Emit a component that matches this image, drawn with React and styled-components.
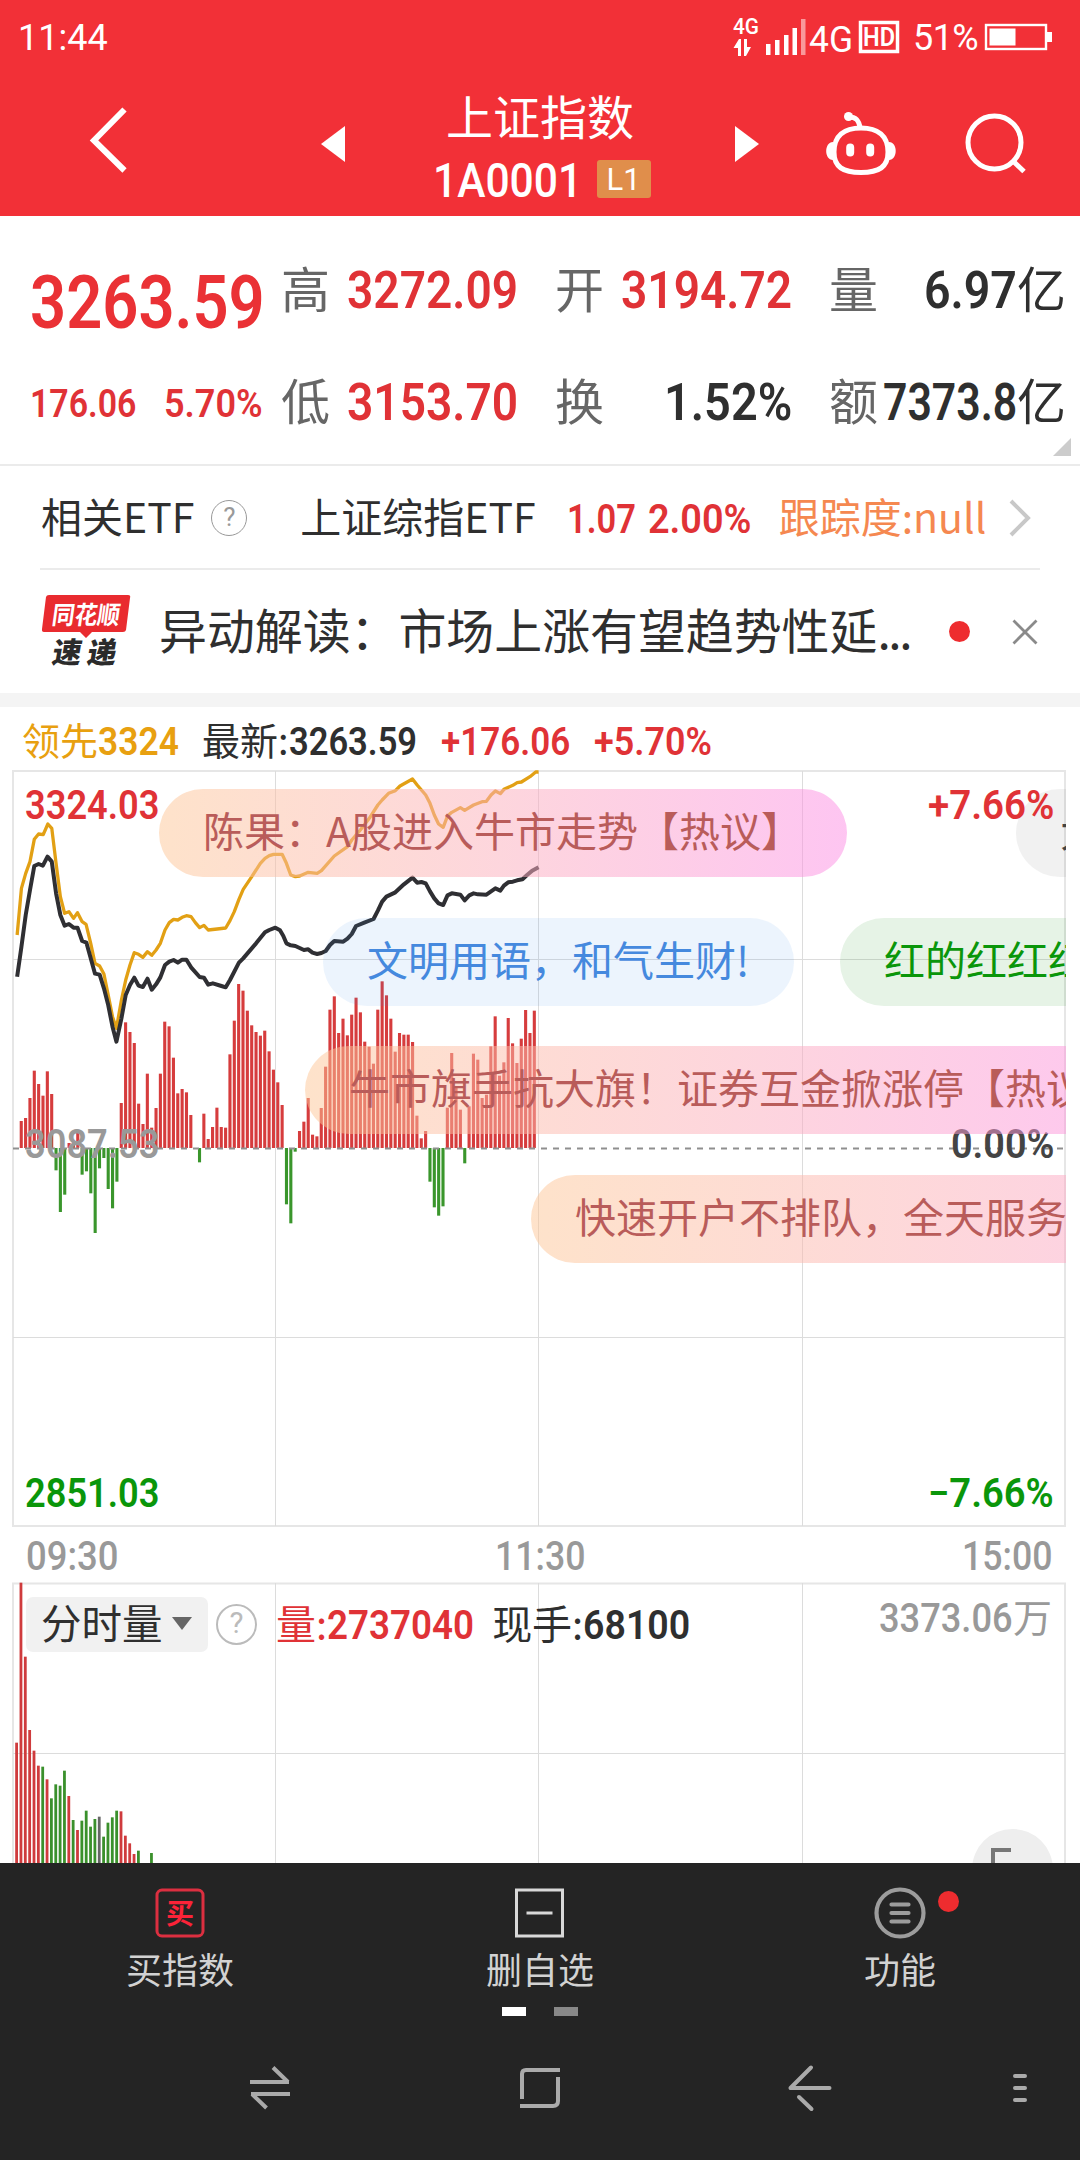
import React, { useLayoutEffect, useRef, useState } from 'react';
import styled, { createGlobalStyle } from 'styled-components';

const RED = '#e03236';
const GREEN = '#0a960a';
const DARK = '#2f2f2f';
const CJK = "'Noto Sans CJK SC', sans-serif";

const GlobalStyle = createGlobalStyle`
  * {
    box-sizing: border-box;
  }
  body {
    margin: 0;
    background: #fff;
    font-family: ${CJK};
  }
  svg {
    display: block;
    flex: none;
    overflow: visible;
  }
`;

const Page = styled.div`
  width: 1080px;
  height: 2160px;
  overflow: hidden;
  display: flex;
  flex-direction: column;
  background: #fff;
`;

// ---- text ----

const NumBox = styled.span`
  display: block;
  flex: none;
  width: ${p => p.$w}px;
  margin-left: ${p => p.$ml || 0}px;
  padding-top: 3px;
  font: ${p => p.$weight || 600} ${p => p.$size}px/1 Roboto, sans-serif;
  color: ${p => p.$color || DARK};
  white-space: nowrap;
`;

const NumText = styled.span`
  display: inline-block;
  vertical-align: top;
  transform-origin: 0 50%;
`;

// narrow figures: the text is squeezed to the width it is given
const Num = ({ w, ml, size = 40, weight, color, children }) => {
  const ref = useRef(null);
  const [scale, setScale] = useState(1);

  useLayoutEffect(() => {
    setScale(w / ref.current.offsetWidth);
  }, [w, size, children]);

  return (
    <NumBox $w={w} $ml={ml} $size={size} $weight={weight} $color={color}>
      <NumText ref={ref} style={{ transform: `scaleX(${scale})` }}>{children}</NumText>
    </NumBox>
  );
};

const Han = styled.span`
  flex: none;
  font-family: ${CJK};
  font-size: ${p => p.$size || 41}px;
  line-height: 1;
  padding-bottom: 0.1em;
  margin-left: ${p => p.$ml || 0}px;
  color: ${p => p.$color || DARK};
  white-space: nowrap;
`;

// ---- status bar and header ----

const Top = styled.header`
  flex: none;
  height: 216px;
  background: #f23037;
  color: #fff;
`;

const StatusBar = styled.div`
  height: 75px;
  padding: 0 28px 0 18px;
  display: flex;
  align-items: center;
  justify-content: space-between;
  font: 400 36px/1 Roboto, sans-serif;
`;

const StatusIcons = styled.div`
  display: flex;
  align-items: center;
`;

const Percent = styled.span`
  margin: 0 6px 0 13px;
  width: 66px;
  letter-spacing: -0.6px;
  white-space: nowrap;
`;

const HeaderRow = styled.div`
  height: 137px;
  padding-left: 88px;
  display: flex;
  align-items: center;
`;

const BackIcon = styled.svg`
  margin-bottom: 3px;
`;

const TitleBlock = styled.div`
  width: 390px;
  padding-top: 8px;
  display: flex;
  flex-direction: column;
  align-items: center;
`;

const Title = styled.h1`
  margin: 0;
  font: 400 47px/1 ${CJK};
  height: 63px;
`;

const CodeRow = styled.div`
  display: flex;
  align-items: center;
  padding-left: 3px;
`;

const LevelBadge = styled.span`
  margin-left: 15px;
  width: 54px;
  height: 38px;
  border-radius: 3px;
  background: #e08e4b;
  font: 400 31px/39px Roboto, sans-serif;
  text-align: center;
`;

const HeaderIcon = styled.div`
  flex: none;
  width: ${p => p.$w}px;
  margin-left: ${p => p.$ml || 0}px;
`;

const Header = () => (
  <Top>
    <StatusBar>
      <span>11:44</span>
      <StatusIcons>
        <svg width="168" height="44" viewBox="732 15 168 44" fill="#fff">
          <text x="733" y="33" fontFamily="Roboto" fontSize="22" fontWeight="500" textLength="26" lengthAdjust="spacingAndGlyphs">4G</text>
          <path d="M733.5 47 L739 38 H741 V55 H738 V47 Z M744 38 H747 V46 H751 L746 55 H744 Z" />
          <rect x="766" y="43" width="4.5" height="11" />
          <rect x="775" y="39" width="4.5" height="15" />
          <rect x="784" y="34" width="4.5" height="20" />
          <rect x="792.5" y="27" width="4.5" height="27" />
          <rect x="801" y="18" width="4.5" height="36" opacity="0.5" />
          <text x="809" y="51" fontFamily="Roboto" fontSize="36" fontWeight="400" textLength="44" lengthAdjust="spacingAndGlyphs">4G</text>
          <rect x="860.5" y="21.5" width="37" height="29" fill="none" stroke="#fff" strokeWidth="3.5" />
          <text x="863" y="45" fontFamily="Roboto" fontSize="26" fontWeight="600" textLength="32" lengthAdjust="spacingAndGlyphs">HD</text>
        </svg>
        <Percent>51%</Percent>
        <svg width="67" height="28" viewBox="0 0 67 28">
          <rect x="1" y="1" width="60" height="24" fill="none" stroke="#fff" strokeWidth="2.4" />
          <rect x="4.5" y="4.5" width="26" height="17" fill="#fff" />
          <rect x="62" y="8" width="5" height="10" fill="#fff" />
        </svg>
      </StatusIcons>
    </StatusBar>
    <HeaderRow>
      <BackIcon width="40" height="70" viewBox="0 0 40 70">
        <path d="M36.5 2.5 L6 33.5 L36.5 63.5" fill="none" stroke="#fff" strokeWidth="6" />
      </BackIcon>
      <HeaderIcon $w={24} $ml={193}>
        <svg width="24" height="36"><path d="M0 18 L24 0 V36 Z" fill="#fff" /></svg>
      </HeaderIcon>
      <TitleBlock>
        <Title>上证指数</Title>
        <CodeRow>
          <Num w={149} size={48} weight={500} color="#fff">1A0001</Num>
          <LevelBadge>L1</LevelBadge>
        </CodeRow>
      </TitleBlock>
      <HeaderIcon $w={24}>
        <svg width="24" height="36"><path d="M24 18 L0 0 V36 Z" fill="#fff" /></svg>
      </HeaderIcon>
      <HeaderIcon $w={74} $ml={64}>
        <svg width="74" height="66" viewBox="824 110 74 66" fill="none" stroke="#fff" strokeWidth="5">
          <path d="M862 127 C879 127 889 135 889 151 C889 166 880 171.5 862 171.5 C844 171.5 835 166 835 151 C835 135 845 127 862 127 Z" />
          <path d="M850 116 C857 116 860 119 861 127" />
          <circle cx="849.5" cy="115.5" r="4.5" fill="#fff" stroke="none" />
          <path d="M834 141 C825 141 825 159 834 159 Z M890 141 C899 141 899 159 890 159 Z" fill="#fff" stroke="none" />
          <path d="M851.2 146.5 V151.5 M871.2 146.5 V151.5" strokeWidth="8" strokeLinecap="round" />
        </svg>
      </HeaderIcon>
      <HeaderIcon $w={68} $ml={65}>
        <svg width="68" height="64" viewBox="962 112 68 64" fill="none" stroke="#fff" strokeWidth="5">
          <circle cx="994.5" cy="142.5" r="26.5" />
          <path d="M1013 161 L1024 171.5" />
        </svg>
      </HeaderIcon>
    </HeaderRow>
  </Top>
);

// ---- quote ----

const Quote = styled.section`
  position: relative;
  flex: none;
  height: 250px;
  padding: 17px 15px 0 30px;
  border-bottom: 2px solid #ebebeb;
  display: grid;
  grid-template-columns: 214px repeat(3, 237px);
  grid-template-rows: 112px 112px;
  column-gap: 37px;
`;

const Price = styled.div`
  display: flex;
  align-items: center;
  padding-top: ${p => p.$drop}px;
`;

const Stat = styled.div`
  display: flex;
  align-items: center;
`;

const StatValue = styled.div`
  margin-left: auto;
  display: flex;
  align-items: center;
`;

const Corner = styled.svg`
  position: absolute;
  right: 9px;
  top: 222px;
`;

const StatCell = ({ label, value, w, unit, color }) => (
  <Stat>
    <Han $size={49} $color="#666">{label}</Han>
    <StatValue>
      <Num w={w} size={52} color={color}>{value}</Num>
      {unit && <Han $size={49}>{unit}</Han>}
    </StatValue>
  </Stat>
);

const QuotePanel = () => (
  <Quote>
    <Price $drop={25}>
      <Num w={235} size={74} color="#ea3135">3263.59</Num>
    </Price>
    <StatCell label="高" value="3272.09" w={171} color={RED} />
    <StatCell label="开" value="3194.72" w={171} color={RED} />
    <StatCell label="量" value="6.97" w={93} unit="亿" />
    <Price $drop={4}>
      <Num w={106} size={39} color={RED}>176.06</Num>
      <Num w={99} ml={28} size={39} color={RED}>5.70%</Num>
    </Price>
    <StatCell label="低" value="3153.70" w={171} color={RED} />
    <StatCell label="换" value="1.52%" w={128} />
    <StatCell label="额" value="7373.8" w={134} unit="亿" />
    <Corner width="18" height="18"><path d="M18 0 V18 H0 Z" fill="#ccc" /></Corner>
  </Quote>
);

// ---- etf and news ----

const EtfRow = styled.div`
  flex: none;
  height: 104px;
  margin: 0 40px;
  padding-top: 2px;
  border-bottom: 2px solid #ebebeb;
  display: flex;
  align-items: center;
`;

const Help = styled.span`
  flex: none;
  width: ${p => p.$size}px;
  height: ${p => p.$size}px;
  margin-left: ${p => p.$ml}px;
  border: ${p => p.$line}px solid ${p => p.$color};
  border-radius: 50%;
  display: flex;
  align-items: center;
  justify-content: center;
  font: 400 ${p => p.$size * 0.72}px/1 Roboto, sans-serif;
  color: ${p => p.$color};
`;

const Arrow = styled.svg`
  margin-left: auto;
  margin-right: 8px;
`;

const NewsRow = styled.div`
  flex: none;
  height: 123px;
  padding: 0 40px;
  display: flex;
  align-items: center;
`;

const NewsTitle = styled.div`
  width: 758px;
  margin-left: 27px;
  padding-bottom: 5px;
  font: 400 47.9px/1.2 ${CJK};
  color: ${DARK};
  white-space: nowrap;
`;

const Ellipsis = styled.span`
  letter-spacing: -2.4px;
`;

const Dot = styled.span`
  flex: none;
  width: 21px;
  height: 21px;
  border-radius: 50%;
  background: #ee2c2f;
`;

const NewsDot = styled(Dot)`
  margin: 0 42px 0 32px;
`;

const Band = styled.div`
  flex: none;
  height: 14px;
  background: #f4f4f4;
`;

const NewsLogo = () => (
  <svg width="92" height="78" viewBox="40 593 92 78">
    <path d="M49 595 H128 Q131 595 130 598 L126 630 Q125.5 632 123 632 H92 L86 638 L80 632 H44 Q41.5 632 42 629 L46 597 Q46.5 595 49 595 Z" fill="#e92b2f" />
    <text transform="translate(51 624) skewX(-8)" fontFamily="Noto Sans CJK SC" fontWeight="700" fontSize="25" fill="#fff" textLength="68" lengthAdjust="spacingAndGlyphs">同花顺</text>
    <text transform="translate(51 662.5) skewX(-10)" fontFamily="Noto Sans CJK SC" fontWeight="900" fontSize="29" fill="#2b2b2b">速</text>
    <text transform="translate(86 662.5) skewX(-10)" fontFamily="Noto Sans CJK SC" fontWeight="900" fontSize="29" fill="#2b2b2b">递</text>
  </svg>
);

const Related = () => (
  <>
    <EtfRow>
      <Han $ml={1}>相关ETF</Han>
      <Help $size={36} $ml={17} $line={1.5} $color="#999">?</Help>
      <Han $ml={53}>上证综指ETF</Han>
      <Num w={69} ml={31} color={RED}>1.07</Num>
      <Num w={103} ml={12} color={RED}>2.00%</Num>
      <Han $ml={28} $color="#f58850">跟踪度:null</Han>
      <Arrow width="24" height="40" viewBox="0 0 24 40">
        <path d="M3 3 L20 20 L3 37" fill="none" stroke="#c8c8c8" strokeWidth="4" />
      </Arrow>
    </EtfRow>
    <NewsRow>
      <NewsLogo />
      <NewsTitle>异动解读：市场上涨有望趋势性延<Ellipsis>...</Ellipsis></NewsTitle>
      <NewsDot />
      <svg width="26" height="26" viewBox="0 0 26 26">
        <path d="M1.5 1.5 L24.5 24.5 M24.5 1.5 L1.5 24.5" stroke="#8a8a8a" strokeWidth="2.8" />
      </svg>
    </NewsRow>
    <Band />
  </>
);

// ---- minute chart ----

const InfoRow = styled.div`
  flex: none;
  height: 63px;
  padding: 4px 0 0 22px;
  display: flex;
  align-items: center;
`;

const Chart = styled.section`
  position: relative;
  flex: none;
  width: 1054px;
  height: 758px;
  margin-left: 12px;
  overflow: hidden;
`;

const Labels = styled.div`
  position: absolute;
  inset: 0;
  padding: 13px 12px 14px 13px;
  display: flex;
  flex-direction: column;
  justify-content: space-between;
`;

const LabelRow = styled.div`
  display: flex;
  justify-content: space-between;
  padding-bottom: ${p => p.$lift || 0}px;
`;

const pillColors = {
  pink: { bg: 'linear-gradient(90deg, rgba(253,198,150,.5), rgba(252,176,190,.52) 50%, rgba(252,140,228,.5))', fg: '#b95c5a' },
  blue: { bg: 'rgba(68,150,235,.1)', fg: '#4589de' },
  green: { bg: 'rgba(10,140,10,.1)', fg: '#0a960a' },
  grey: { bg: 'rgba(120,120,120,.1)', fg: '#444' },
};

const Pill = styled.div`
  position: absolute;
  left: ${p => p.$x}px;
  top: ${p => p.$y}px;
  height: 88px;
  min-width: ${p => p.$min || 0}px;
  padding: 0 45px 0 44px;
  border-radius: 44px;
  font: 400 41px/81px ${CJK};
  white-space: nowrap;
  background: ${p => pillColors[p.$tone].bg};
  color: ${p => pillColors[p.$tone].fg};
`;

const AxisRow = styled.div`
  flex: none;
  height: 54px;
  padding: 0 28px 0 26px;
  display: flex;
  align-items: center;
  justify-content: space-between;
`;

const leadLine = '48,555 60,415 72,370 84,335 96,268 108,252 121,254 134,222 145,235 157,340 169,440 181,490 193,485 206,505 217,488 230,515 241,523 254,580 266,640 279,648 291,672 303,735 315,800 326,835 340,750 352,690 364,645 376,608 388,613 400,622 413,605 425,616 437,600 449,580 462,540 474,518 486,508 498,510 510,502 522,497 535,500 547,518 559,533 571,526 583,540 608,537 632,534 644,512 656,485 669,448 681,418 705,380 729,340 742,325 754,317 766,313 790,313 802,340 814,375 827,380 839,378 863,367 888,370 900,362 936,318 973,290 985,270 1009,240 1034,205 1058,165 1070,150 1088,130 1107,122 1120,108 1155,87 1168,105 1192,135 1204,160 1216,195 1228,222 1241,232 1253,198 1265,187 1289,173 1301,181 1326,165 1350,155 1362,154 1375,135 1387,123 1401,131 1411,118 1436,106 1448,98 1460,96 1484,80 1500,66 1508,66';

const priceLine = '48,680 60,590 72,495 84,420 96,348 108,342 120,347 133,320 145,335 157,430 169,495 181,527 193,522 206,533 217,533 230,573 242,578 254,625 266,671 279,674 291,715 303,765 315,830 326,875 340,805 352,735 364,705 376,683 388,707 400,711 413,686 425,719 437,703 449,682 462,645 474,635 486,630 498,638 510,629 522,629 535,652 559,681 571,683 583,704 596,700 620,708 632,712 644,690 669,638 681,625 717,580 742,547 754,540 771,533 784,541 793,557 802,580 814,586 827,588 851,600 863,598 875,608 888,612 900,609 912,603 924,585 936,573 961,575 973,566 985,552 997,528 1020,518 1046,507 1058,482 1070,455 1082,440 1107,427 1131,403 1155,383 1168,398 1180,396 1192,400 1204,424 1216,445 1228,460 1241,465 1253,436 1265,430 1289,434 1301,451 1314,436 1326,430 1338,433 1362,434 1387,415 1401,422 1411,407 1423,397 1436,395 1448,391 1463,388 1475,376 1490,362 1508,352';

// one value a minute, three units to a pixel
const momentum = [
  81, 90, 150, 232, 192, 157, 230, 162, -67, -192, -140, 15, 20, 45, -80, -70, -136, -255, -61, -30, -123, -181, -101,
  135, 377, 348, 315, 133, 72, 223, 61, 120, 223, 379, 365, 271, 164, 177, 167, 99, 0, -43, 103, 27, 63, 121, 63, 61,
  281, 382, 492, 472, 412, 368, 348, 337, 352, 290, 235, 197, 129, -169, -226, -11, 51, 79, 150, 40, 35, 120, 244,
  415, 455, 345, 388, 338, 400, 451, 407, 319, 304, 253, 415, 500, 458, 388, 289, 345, 340, 340, 318, 97, 29, 51,
  -101, -178, -203, -175, 121, 285, 185, 115, -46, 125, 283, 265, 150, 160, 305, 395, 217, 257, 390, 314, 255, 328,
  414, 345, 412,
];

const MinuteChart = () => (
  <Chart>
    <svg width="1054" height="758" fill="none">
      <rect x="1" y="1" width="1052" height="755" stroke="#e6e6e6" strokeWidth="2" />
      <path d="M263.5 1 V756 M526.5 1 V756 M790.5 1 V756 M1 189.5 H1053 M1 567.5 H1053" stroke="#dcdcdc" />
      {momentum.map((v, i) => (
        <rect
          key={i}
          x={7.7 + i * 4.348}
          y={v > 0 ? 378 - v / 3 : 378}
          width="3.1"
          height={Math.abs(v) / 3}
          fill={v > 0 ? '#d63c3d' : '#3a962c'}
        />
      ))}
      <path d="M1 378.5 H1053" stroke="#8f8f8f" strokeWidth="2" strokeDasharray="6 6" />
      <g transform="translate(-12 -20) scale(0.35714 0.33333)" strokeLinejoin="round">
        <polyline points={leadLine} stroke="#e2a014" strokeWidth="3.3" vectorEffect="non-scaling-stroke" />
        <polyline points={priceLine} stroke="#2f2f33" strokeWidth="4" vectorEffect="non-scaling-stroke" />
      </g>
    </svg>
    <Pill $tone="grey" $x={1004} $y={19}>大</Pill>
    <Labels>
      <LabelRow>
        <Num w={134} color={RED}>3324.03</Num>
        <Num w={126} color={RED}>+7.66%</Num>
      </LabelRow>
      <LabelRow $lift={10}>
        <Num w={134} color="#999">3087.53</Num>
        <Num w={103} color="#444">0.00%</Num>
      </LabelRow>
      <LabelRow>
        <Num w={134} color={GREEN}>2851.03</Num>
        <Num w={126} color={GREEN}>−7.66%</Num>
      </LabelRow>
    </Labels>
    <Pill $tone="pink" $x={147} $y={19}>陈果：A股进入牛市走势【热议】</Pill>
    <Pill $tone="blue" $x={311} $y={148}>文明用语，和气生财!</Pill>
    <Pill $tone="green" $x={828} $y={148}>红的红红红</Pill>
    <Pill $tone="pink" $x={293} $y={276}>牛市旗手抗大旗！证券互金掀涨停【热议】</Pill>
    <Pill $tone="pink" $x={519} $y={405} $min={920}>快速开户不排队，全天服务</Pill>
  </Chart>
);

// ---- volume ----

const Volume = styled.section`
  position: relative;
  flex: none;
  width: 1054px;
  height: 281px;
  margin-left: 12px;
  overflow: hidden;
`;

const VolumePlot = styled.svg`
  position: absolute;
  left: 0;
  top: 0;
`;

const VolumeInfo = styled.div`
  position: relative;
  padding: 14px 14px 0;
  display: flex;
  align-items: center;
`;

const Picker = styled.div`
  width: 182px;
  height: 55px;
  padding: 0 16px 0 15px;
  border-radius: 7px;
  background: #f1f1f1;
  display: flex;
  align-items: center;
  justify-content: space-between;
`;

const MaxVolume = styled.div`
  margin-left: auto;
  padding-bottom: 13px;
  display: flex;
  align-items: center;
`;

const ExpandButton = styled.div`
  position: absolute;
  left: 960px;
  top: 247px;
  width: 81px;
  height: 81px;
  border-radius: 50%;
  background: #eee;
  padding: 19px 0 0 19px;
`;

const volumeBars = [
  ['r', 848], ['r', 368], ['r', 590], ['r', 810], ['r', 872], ['r', 917], ['g', 920], ['r', 958], ['g', 1015],
  ['g', 973], ['g', 977], ['g', 932], ['r', 1008], ['g', 1080], ['r', 1110], ['g', 1082], ['g', 1052], ['g', 1100],
  ['g', 1077], ['k', 1070], ['g', 1130], ['g', 1088], ['g', 1072], ['g', 1052], ['r', 1054], ['r', 1127],
  ['r', 1150], ['r', 1182], ['g', 1172], null, null, ['g', 1179],
];

const barColor = { r: '#cf3b3d', g: '#3a902c', k: '#666' };

const VolumeChart = () => (
  <Volume>
    <VolumePlot width="1054" height="281" fill="none">
      <path d="M1 300 V1.5 H1053 V300" stroke="#e6e6e6" strokeWidth="2" />
      <path d="M263.5 1 V281 M526.5 1 V281 M790.5 1 V281 M1 171.5 H1053" stroke="#dcdcdc" />
      {volumeBars.map((bar, i) => bar && (
        <rect key={i} x={3.2 + i * 4.35} y={bar[1] / 3 - 122} width="2.8" height="300" fill={barColor[bar[0]]} />
      ))}
    </VolumePlot>
    <VolumeInfo>
      <Picker>
        <Han $size={40.5}>分时量</Han>
        <svg width="20" height="14"><path d="M0 0 H20 L10 13 Z" fill="#666" /></svg>
      </Picker>
      <Help $size={41} $ml={8} $line={2.5} $color="#bbb">?</Help>
      <Han $ml={19} $size={40} $color={RED}>量:</Han>
      <Num w={147} color={RED}>2737040</Num>
      <Han $ml={18} $size={40}>现手:</Han>
      <Num w={107} color={DARK}>68100</Num>
      <MaxVolume>
        <Num w={134} size={40} weight={500} color="#999">3373.06</Num>
        <Han $size={39} $color="#999">万</Han>
      </MaxVolume>
    </VolumeInfo>
    <ExpandButton>
      <svg width="24" height="24"><path d="M2 24 V2 H20" fill="none" stroke="#777" strokeWidth="4" /></svg>
    </ExpandButton>
  </Volume>
);

// ---- bottom ----

const Bottom = styled.footer`
  flex: none;
  height: 297px;
  background: #242424;
`;

const Actions = styled.div`
  height: 144px;
  padding-top: 24px;
  display: grid;
  grid-template-columns: repeat(3, 360px);
`;

const Action = styled.div`
  position: relative;
  display: flex;
  flex-direction: column;
  align-items: center;
`;

const ActionLabel = styled.span`
  margin-top: 10px;
  font: 400 36px/1 ${CJK};
  color: #d2d2d2;
`;

const Badge = styled(Dot)`
  position: absolute;
  left: 218px;
  top: 4px;
`;

const Pager = styled.div`
  display: flex;
  justify-content: center;
  gap: 28px;
`;

const PagerItem = styled.span`
  width: 24px;
  height: 9px;
  background: ${p => (p.$active ? '#fff' : '#888')};
`;

const NavBar = styled.nav`
  height: 144px;
  padding-left: 135px;
  display: grid;
  grid-template-columns: 270px 270px 270px 150px;
  align-items: center;
  justify-items: center;
`;

const NavIcon = ({ d, round }) => (
  <svg width="50" height="50" fill="none" stroke="#aaa" strokeWidth="4" strokeLinecap={round ? 'round' : 'butt'}>
    <path d={d} />
  </svg>
);

const BottomBar = () => (
  <Bottom>
    <Actions>
      <Action>
        <svg width="53" height="53" viewBox="0 0 53 53">
          <rect x="3" y="3" width="46" height="46" rx="5" fill="none" stroke="#dc2f40" strokeWidth="3" />
          <text x="26" y="36.5" textAnchor="middle" fontFamily="Noto Sans CJK SC" fontWeight="700" fontSize="28" fill="#fb2338">买</text>
        </svg>
        <ActionLabel>买指数</ActionLabel>
      </Action>
      <Action>
        <svg width="53" height="53" viewBox="0 0 53 53" fill="none" stroke="#d8d8d8" strokeWidth="3">
          <rect x="2.5" y="3" width="46" height="46" />
          <path d="M12.5 26 H38.5" />
        </svg>
        <ActionLabel>删自选</ActionLabel>
      </Action>
      <Action>
        <svg width="53" height="53" viewBox="0 0 53 53" fill="none" stroke="#9c9c9c" strokeWidth="4.2">
          <circle cx="26" cy="26" r="23.5" />
          <path d="M17.5 17.5 H34.5 M17.5 26 H34.5 M17.5 34.5 H34.5" strokeLinecap="round" />
        </svg>
        <ActionLabel>功能</ActionLabel>
        <Badge />
      </Action>
    </Actions>
    <Pager>
      <PagerItem $active />
      <PagerItem />
    </Pager>
    <NavBar>
      <NavIcon d="M5 19 H44 M28 4.5 L43 19 M45 31 H6 M7 31 L21.5 45" />
      <NavIcon d="M7 36 V11 Q7 7 11 7 H45 M43 14 V38 Q43 43 38 43 H5" />
      <NavIcon round d="M44.5 25 H5.5 M5.5 25 L26 4.5 M14 34 L26.5 46" />
      <NavIcon round d="M20 13 H30 M20 25 H30 M20 37 H30" />
    </NavBar>
  </Bottom>
);

export default () => (
  <Page>
    <GlobalStyle />
    <Header />
    <QuotePanel />
    <Related />
    <InfoRow>
      <Han $size={38} $color="#e8a010">领先</Han>
      <Num w={81} size={38} color="#e8a010">3324</Num>
      <Han $ml={23} $size={38}>最新:</Han>
      <Num w={128} size={38}>3263.59</Num>
      <Num w={129} ml={24} size={38} color={RED}>+176.06</Num>
      <Num w={118} ml={24} size={38} color={RED}>+5.70%</Num>
    </InfoRow>
    <MinuteChart />
    <AxisRow>
      <Num w={92} weight={500} color="#999">09:30</Num>
      <Num w={90} weight={500} color="#999">11:30</Num>
      <Num w={90} weight={500} color="#999">15:00</Num>
    </AxisRow>
    <VolumeChart />
    <BottomBar />
  </Page>
);
